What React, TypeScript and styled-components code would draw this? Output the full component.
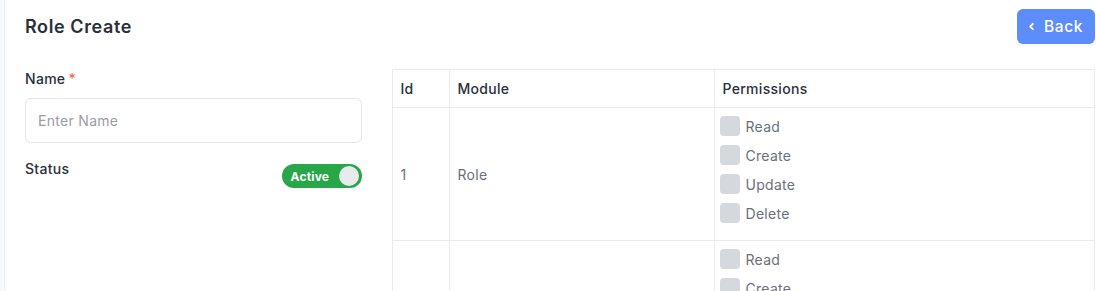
import React from 'react';
import styled, { createGlobalStyle } from 'styled-components';

const GlobalStyle = createGlobalStyle`
  html, body {
    margin: 0;
    padding: 0;
    background: #f8f9fb;
    font-family: 'Inter', 'Noto Sans', sans-serif;
    letter-spacing: 0.3px;
  }
  * {
    box-sizing: border-box;
  }
`;

const StyledPage = styled.div`
  padding-left: 4px;
  height: 291px;
  overflow: hidden;
`;

const StyledCard = styled.section`
  background: #ffffff;
  border-left: 1px solid #eceef1;
  min-height: 291px;
  padding: 9px 1px 0 20px;
`;

const StyledHeader = styled.header`
  display: flex;
  justify-content: space-between;
  align-items: center;
`;

const StyledTitle = styled.h4`
  margin: 0;
  font-size: 18px;
  font-weight: 600;
  color: #2a2f3a;
  letter-spacing: 0.6px;
`;

const StyledBackButton = styled.button`
  display: flex;
  align-items: center;
  justify-content: center;
  gap: 8px;
  height: 35px;
  width: 78px;
  padding: 0 2px 0 0;
  border: none;
  border-radius: 6px;
  background: #5c8dfb;
  color: #ffffff;
  font-family: inherit;
  font-size: 15.5px;
  font-weight: 500;
  letter-spacing: 0.6px;
  cursor: pointer;
`;

const StyledBody = styled.div`
  display: grid;
  grid-template-columns: 336.5px 1fr;
  column-gap: 30px;
  margin-top: 25px;
`;

const StyledForm = styled.div`
  display: flex;
  flex-direction: column;
`;

const StyledLabel = styled.label`
  display: block;
  font-size: 14px;
  font-weight: 500;
  line-height: 20px;
  color: #2a2f3a;
`;

const StyledRequired = styled.span`
  color: #e5735c;
  margin-left: 3px;
`;

const StyledInput = styled.input`
  margin-top: 9px;
  height: 45px;
  width: 100%;
  border: 1px solid #e3e5e9;
  border-radius: 6px;
  padding: 0 12px;
  font-family: inherit;
  font-size: 14px;
  letter-spacing: 0.3px;
  color: #2a2f3a;
  outline: none;

  &::placeholder {
    color: #9a9ca5;
  }
`;

const StyledStatusRow = styled.div`
  display: flex;
  justify-content: space-between;
  align-items: flex-start;
  margin-top: 16px;
`;

const StyledToggle = styled.button`
  margin-top: 5px;
  display: flex;
  align-items: center;
  justify-content: space-between;
  width: 80px;
  height: 24px;
  padding: 0 3px 0 9px;
  border: none;
  border-radius: 12px;
  background: #28a748;
  color: #ffffff;
  font-family: inherit;
  font-size: 12px;
  font-weight: 700;
  letter-spacing: 0.2px;
  cursor: pointer;
`;

const StyledKnob = styled.span`
  width: 20px;
  height: 20px;
  border-radius: 50%;
  background: #e8eaed;
`;

const StyledTable = styled.table`
  width: 100%;
  border-collapse: collapse;
  border: 1px solid #e9ebee;
  font-size: 14px;
`;

const StyledHeadCell = styled.th<{ $width?: number }>`
  width: ${({ $width }) => ($width ? `${$width}px` : 'auto')};
  height: 38px;
  padding: 0 8px;
  text-align: left;
  font-weight: 500;
  color: #2a2f3a;
  border: 1px solid #e9ebee;
`;

const StyledCell = styled.td`
  padding: 0 8px;
  color: #6b707a;
  border: 1px solid #e9ebee;
  vertical-align: middle;
`;

const StyledPermissionCell = styled.td`
  padding: 8px 5px 17px;
  border: 1px solid #e9ebee;
  vertical-align: top;
`;

const StyledPermission = styled.label`
  display: flex;
  align-items: center;
  gap: 6px;
  height: 20px;
  margin-bottom: 9px;
  color: #6b707a;
  font-size: 14px;

  &:last-child {
    margin-bottom: 0;
  }
`;

const StyledCheckbox = styled.span`
  width: 20px;
  height: 20px;
  border-radius: 4px;
  background: #d5d8dc;
  flex-shrink: 0;
`;

type ModuleRow = {
  id: string;
  name: string;
};

const modules: ModuleRow[] = [
  { id: '1', name: 'Role' },
  { id: '', name: '' },
];

const permissions = ['Read', 'Create', 'Update', 'Delete'];

const ChevronLeft = () => (
  <svg width="9" height="9" viewBox="0 0 10 10" fill="none">
    <path d="M6.5 2 L3.5 5 L6.5 8" stroke="#fff" strokeWidth="2" strokeLinecap="round" strokeLinejoin="round" />
  </svg>
);

const App = (): JSX.Element => {
  return (
    <>
      <GlobalStyle />
      <StyledPage>
        <StyledCard>
          <StyledHeader>
            <StyledTitle>Role Create</StyledTitle>
            <StyledBackButton>
              <ChevronLeft />
              Back
            </StyledBackButton>
          </StyledHeader>
          <StyledBody>
            <StyledForm>
              <StyledLabel>
                Name<StyledRequired>*</StyledRequired>
              </StyledLabel>
              <StyledInput placeholder="Enter Name" />
              <StyledStatusRow>
                <StyledLabel>Status</StyledLabel>
                <StyledToggle>
                  Active
                  <StyledKnob />
                </StyledToggle>
              </StyledStatusRow>
            </StyledForm>
            <StyledTable>
              <thead>
                <tr>
                  <StyledHeadCell $width={57}>Id</StyledHeadCell>
                  <StyledHeadCell $width={265}>Module</StyledHeadCell>
                  <StyledHeadCell>Permissions</StyledHeadCell>
                </tr>
              </thead>
              <tbody>
                {modules.map((row, i) => (
                  <tr key={i}>
                    <StyledCell>{row.id}</StyledCell>
                    <StyledCell>{row.name}</StyledCell>
                    <StyledPermissionCell>
                      {permissions.map((p) => (
                        <StyledPermission key={p}>
                          <StyledCheckbox />
                          {p}
                        </StyledPermission>
                      ))}
                    </StyledPermissionCell>
                  </tr>
                ))}
              </tbody>
            </StyledTable>
          </StyledBody>
        </StyledCard>
      </StyledPage>
    </>
  );
};

export default App;
